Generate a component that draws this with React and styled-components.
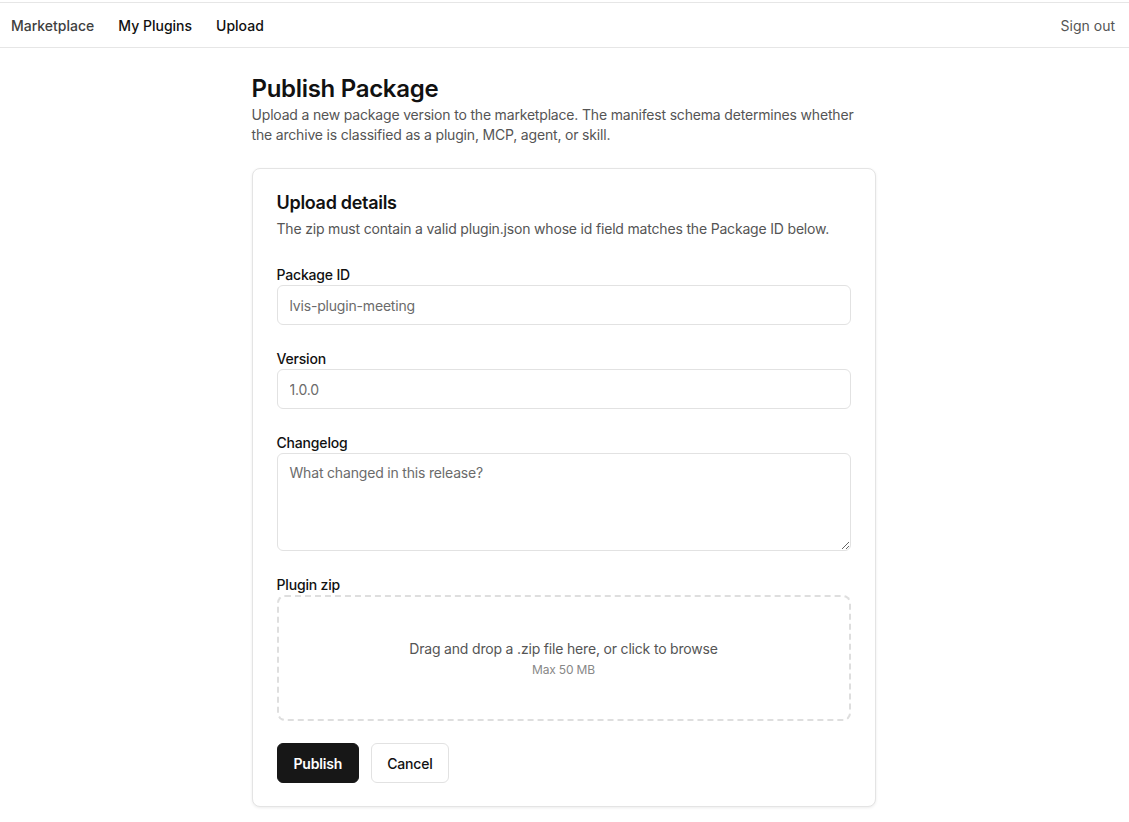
import styled, { createGlobalStyle } from "styled-components";

const GlobalStyle = createGlobalStyle`
  * {
    box-sizing: border-box;
  }

  body {
    margin: 0;
    background: #fff;
    font-family: Inter, "Noto Sans", "Liberation Sans", sans-serif;
    color: #111;
    letter-spacing: -0.18px;
    -webkit-font-smoothing: antialiased;
  }
`;

const TopBar = styled.nav`
  display: flex;
  align-items: center;
  justify-content: space-between;
  height: 46px;
  margin-top: 2px;
  padding: 0 14px 0 11px;
  border-top: 1px solid #e6e6e6;
  border-bottom: 1px solid #e6e6e6;
`;

const NavLinks = styled.div`
  display: flex;
  align-items: center;
  gap: 24px;
`;

const NavLink = styled.a`
  font-size: 14px;
  font-weight: 500;
  letter-spacing: 0;
  color: ${(p) => (p.$muted ? "#3f3f3f" : "#111")};
  text-decoration: none;
  cursor: pointer;
`;

const SignOut = styled.button`
  border: none;
  background: none;
  padding: 0;
  font: inherit;
  font-size: 14px;
  letter-spacing: 0;
  color: #555;
  cursor: pointer;
`;

const Main = styled.main`
  width: 624px;
  margin-left: calc(50% - 313px);
  padding: 25px 0 40px;
`;

const PageTitle = styled.h1`
  margin: 0;
  font-size: 24px;
  line-height: 32px;
  font-weight: 600;
  letter-spacing: -0.3px;
`;

const PageLead = styled.p`
  margin: 0 0 23px;
  font-size: 14px;
  line-height: 20px;
  color: #555;
`;

const Card = styled.section`
  border: 1px solid #e4e4e4;
  border-radius: 8px;
  background: #fff;
  box-shadow: 0 1px 3px rgba(0, 0, 0, 0.08);
  padding: 22px 24px 23px;
`;

const CardTitle = styled.h2`
  margin: 0 0 4px;
  font-size: 18px;
  line-height: 24px;
  font-weight: 600;
  letter-spacing: -0.3px;
`;

const CardLead = styled.p`
  margin: 0 0 26px;
  font-size: 14px;
  line-height: 20px;
  color: #555;
`;

const Form = styled.form`
  display: flex;
  flex-direction: column;
  gap: 24px;
`;

const Field = styled.div`
  display: flex;
  flex-direction: column;
`;

const Label = styled.label`
  font-size: 14px;
  line-height: 20px;
  font-weight: 500;
  color: #111;
`;

const inputBase = `
  width: 100%;
  border: 1px solid #e2e2e2;
  border-radius: 6px;
  background: #fff;
  font-family: inherit;
  font-size: 14px;
  letter-spacing: -0.18px;
  color: #666;
  outline: none;
  &::placeholder {
    color: #6b6b6b;
  }
`;

const TextInput = styled.input`
  ${inputBase}
  height: 40px;
  padding: 0 12px;
`;

const TextArea = styled.textarea`
  ${inputBase}
  height: 98px;
  padding: 9px 12px;
  line-height: 20px;
  resize: vertical;
`;

const DropZone = styled.div`
  display: flex;
  flex-direction: column;
  align-items: center;
  justify-content: center;
  gap: 3px;
  height: 126px;
  border: 2px dashed #dedede;
  border-radius: 8px;
  cursor: pointer;
`;

const DropText = styled.span`
  font-size: 14px;
  line-height: 20px;
  color: #555;
`;

const DropHint = styled.span`
  font-size: 12px;
  line-height: 16px;
  color: #888;
`;

const Actions = styled.div`
  display: flex;
  gap: 12px;
  margin-top: -2px;
`;

const Button = styled.button`
  height: 40px;
  padding: 0 ${(p) => (p.$primary ? "16px" : "15px")};
  border-radius: 6px;
  border: 1px solid ${(p) => (p.$primary ? "#171717" : "#e2e2e2")};
  background: ${(p) => (p.$primary ? "#171717" : "#fff")};
  color: ${(p) => (p.$primary ? "#fff" : "#111")};
  font-family: inherit;
  font-size: 14px;
  letter-spacing: -0.18px;
  font-weight: ${(p) => (p.$primary ? 600 : 500)};
  cursor: pointer;
`;

export default function App() {
  return (
    <>
      <GlobalStyle />
      <TopBar>
        <NavLinks>
          <NavLink $muted>Marketplace</NavLink>
          <NavLink>My Plugins</NavLink>
          <NavLink>Upload</NavLink>
        </NavLinks>
        <SignOut type="button">Sign out</SignOut>
      </TopBar>

      <Main>
        <PageTitle>Publish Package</PageTitle>
        <PageLead>
          Upload a new package version to the marketplace. The manifest schema
          determines whether the archive is classified as a plugin, MCP, agent,
          or skill.
        </PageLead>

        <Card>
          <CardTitle>Upload details</CardTitle>
          <CardLead>
            The zip must contain a valid plugin.json whose id field matches the
            Package ID below.
          </CardLead>

          <Form onSubmit={(e) => e.preventDefault()}>
            <Field>
              <Label htmlFor="pkg-id">Package ID</Label>
              <TextInput id="pkg-id" placeholder="lvis-plugin-meeting" />
            </Field>

            <Field>
              <Label htmlFor="pkg-version">Version</Label>
              <TextInput id="pkg-version" placeholder="1.0.0" />
            </Field>

            <Field>
              <Label htmlFor="pkg-changelog">Changelog</Label>
              <TextArea
                id="pkg-changelog"
                placeholder="What changed in this release?"
              />
            </Field>

            <Field>
              <Label>Plugin zip</Label>
              <DropZone>
                <DropText>Drag and drop a .zip file here, or click to browse</DropText>
                <DropHint>Max 50 MB</DropHint>
              </DropZone>
            </Field>

            <Actions>
              <Button type="submit" $primary>
                Publish
              </Button>
              <Button type="button">Cancel</Button>
            </Actions>
          </Form>
        </Card>
      </Main>
    </>
  );
}
